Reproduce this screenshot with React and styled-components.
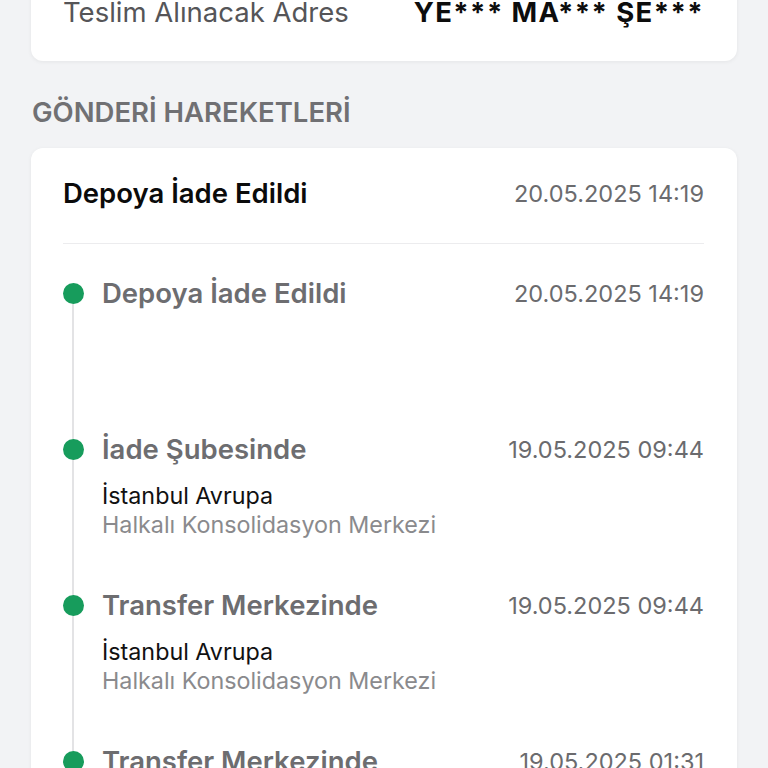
import React from 'react'
import styled, { createGlobalStyle } from 'styled-components'

const GlobalStyle = createGlobalStyle`
  html, body {
    margin: 0;
    padding: 0;
    background: #f2f3f5;
    font-family: Inter, "Noto Sans", "Liberation Sans", sans-serif;
    -webkit-font-smoothing: antialiased;
  }
`

const Page = styled.div`
  height: 768px;
  overflow: hidden;
  padding: 0 31px;
`

const Card = styled.div`
  background: #fff;
  border-radius: 12px;
  box-shadow: 0 1px 4px rgba(0, 0, 0, 0.06);
  padding: 0 33px 0 32px;
`

const TopCard = styled(Card)`
  margin-top: -40px;
  padding-top: 36px;
  padding-bottom: 33px;
`

const InfoRow = styled.div`
  display: flex;
  justify-content: space-between;
  align-items: center;
  height: 32px;
`

const InfoLabel = styled.span`
  font-size: 27.5px;
  color: #555558;
`

const InfoValue = styled.span`
  font-size: 27.5px;
  font-weight: 700;
  color: #0d0d0d;
  letter-spacing: 1.4px;
`

const SectionTitle = styled.h2`
  margin: 35px 0 20px 1px;
  font-size: 27.5px;
  font-weight: 600;
  color: #707073;
  line-height: 32px;
`

const HeadRow = styled.div`
  display: flex;
  justify-content: space-between;
  align-items: center;
  height: 96px;
  padding-bottom: 5px;
  box-sizing: border-box;
  border-bottom: 1px solid #ececee;
`

const HeadTitle = styled.span`
  font-size: 27.5px;
  font-weight: 600;
  color: #0b0b0b;
`

const DateText = styled.span`
  font-size: 23.5px;
  color: #6b6b6e;
`

const Timeline = styled.div`
  position: relative;
  padding-top: 32px;

  &::before {
    content: '';
    position: absolute;
    left: 9px;
    top: 50px;
    bottom: 0;
    width: 2px;
    background: #e3e3e5;
  }
`

const Item = styled.div`
  display: flex;
  gap: 18px;
  min-height: 156px;
`

const Dot = styled.span`
  flex: none;
  width: 21px;
  height: 21px;
  margin-top: 7px;
  border-radius: 50%;
  background: #179c5c;
  position: relative;
  z-index: 1;
`

const ItemBody = styled.div`
  flex: 1;
  display: flex;
  flex-direction: column;
`

const ItemHead = styled.div`
  display: flex;
  justify-content: space-between;
  align-items: center;
  height: 34px;
`

const ItemTitle = styled.span`
  font-size: 27.5px;
  font-weight: 600;
  color: #6d6d70;
`

const City = styled.div`
  margin-top: 15px;
  font-size: 23.3px;
  line-height: 30px;
  color: #111;
`

const Place = styled.div`
  font-size: 23.3px;
  line-height: 28px;
  color: #8a8a8d;
`

const events = [
  { title: 'Depoya İade Edildi', date: '20.05.2025 14:19' },
  { title: 'İade Şubesinde', date: '19.05.2025 09:44', city: 'İstanbul Avrupa', place: 'Halkalı Konsolidasyon Merkezi' },
  { title: 'Transfer Merkezinde', date: '19.05.2025 09:44', city: 'İstanbul Avrupa', place: 'Halkalı Konsolidasyon Merkezi' },
  { title: 'Transfer Merkezinde', date: '19.05.2025 01:31', city: 'İstanbul Avrupa', place: 'Halkalı Konsolidasyon Merkezi' },
]

export default function App() {
  return (
    <>
      <GlobalStyle />
      <Page>
        <TopCard>
          <InfoRow>
            <InfoLabel>Teslim Alınacak Adres</InfoLabel>
            <InfoValue>YE*** MA*** ŞE***</InfoValue>
          </InfoRow>
        </TopCard>

        <SectionTitle>GÖNDERİ HAREKETLERİ</SectionTitle>

        <Card>
          <HeadRow>
            <HeadTitle>Depoya İade Edildi</HeadTitle>
            <DateText>20.05.2025 14:19</DateText>
          </HeadRow>
          <Timeline>
            {events.map((e, i) => (
              <Item key={i}>
                <Dot />
                <ItemBody>
                  <ItemHead>
                    <ItemTitle>{e.title}</ItemTitle>
                    <DateText>{e.date}</DateText>
                  </ItemHead>
                  {e.city && <City>{e.city}</City>}
                  {e.place && <Place>{e.place}</Place>}
                </ItemBody>
              </Item>
            ))}
          </Timeline>
        </Card>
      </Page>
    </>
  )
}
